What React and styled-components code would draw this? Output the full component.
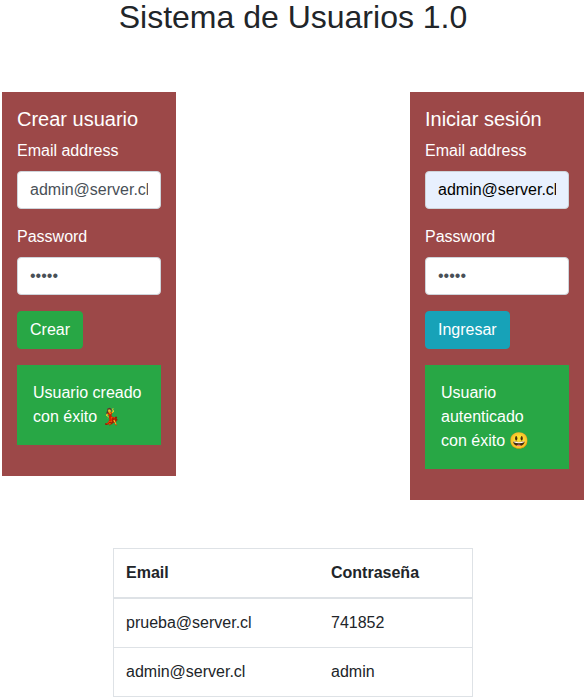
import React from "react";
import styled, { createGlobalStyle } from "styled-components";

const GlobalStyle = createGlobalStyle`
  *, *::before, *::after { box-sizing: border-box; }
  html { overflow: hidden; }
  body {
    margin: 0;
    background: #fff;
    color: #212529;
    font-family: "Liberation Sans", Arial, "Noto Color Emoji", sans-serif;
    font-size: 16px;
    line-height: 1.5;
  }
`;

const Page = styled.main`
  width: 587px;
  height: 699px;
  overflow: hidden;
`;

const Title = styled.h1`
  margin: -2px 0 56px;
  height: 38px;
  padding-right: 1px;
  font-size: 32px;
  font-weight: 400;
  line-height: 38px;
  text-align: center;
`;

const Panels = styled.section`
  display: flex;
  justify-content: space-between;
  align-items: flex-start;
  height: 456px;
  padding: 0 3px 0 2px;
`;

const Card = styled.form`
  width: 174px;
  padding: 15px 15px 31px;
  background: #9c4848;
  color: #fff;
`;

const CardTitle = styled.h2`
  margin: 0 0 8px;
  font-size: 20px;
  font-weight: 400;
  line-height: 24px;
`;

const Field = styled.div`
  margin-bottom: 16px;
`;

const Label = styled.label`
  display: block;
  margin-bottom: 8px;
`;

const Input = styled.input`
  display: block;
  width: 100%;
  height: 38px;
  padding: 6px 12px;
  border: 1px solid #ced4da;
  border-radius: 4px;
  background: ${(p) => (p.$autofilled ? "#e8f0fe" : "#fff")};
  color: ${(p) => (p.$autofilled ? "#000" : "#495057")};
  font: inherit;
  outline: none;
`;

const Button = styled.button`
  display: block;
  height: 38px;
  padding: 6px 12px;
  border: 1px solid ${(p) => p.$color};
  border-radius: 4px;
  background: ${(p) => p.$color};
  color: #fff;
  font: inherit;
`;

const Message = styled.div`
  margin-top: 16px;
  padding: 16px;
  background: #28a745;
`;

const Table = styled.table`
  width: 360px;
  margin: 0 0 0 113px;
  border-collapse: collapse;
  table-layout: fixed;
  border: 1px solid #dee2e6;
`;

const HeadCell = styled.th`
  width: ${(p) => p.$width};
  padding: 12px;
  border-bottom: 2px solid #dee2e6;
  text-align: left;
  font-weight: 700;
`;

const Cell = styled.td`
  padding: 12px;
  border-top: 1px solid #dee2e6;
`;

const users = [
  { email: "prueba@server.cl", password: "741852" },
  { email: "admin@server.cl", password: "admin" },
];

function UserForm({ id, title, action, color, autofilled, message }) {
  return (
    <Card onSubmit={(e) => e.preventDefault()}>
      <CardTitle>{title}</CardTitle>
      <Field>
        <Label htmlFor={`${id}-email`}>Email address</Label>
        <Input id={`${id}-email`} type="email" defaultValue="admin@server.cl" $autofilled={autofilled} />
      </Field>
      <Field>
        <Label htmlFor={`${id}-password`}>Password</Label>
        <Input id={`${id}-password`} type="password" defaultValue="admin" />
      </Field>
      <Button type="submit" $color={color}>{action}</Button>
      <Message>{message}</Message>
    </Card>
  );
}

export default function App() {
  return (
    <Page>
      <GlobalStyle />
      <Title>Sistema de Usuarios 1.0</Title>
      <Panels>
        <UserForm id="create" title="Crear usuario" action="Crear" color="#28a745" message="Usuario creado con éxito 💃" />
        <UserForm id="login" title="Iniciar sesión" action="Ingresar" color="#17a2b8" autofilled message="Usuario autenticado con éxito 😃" />
      </Panels>
      <Table>
        <thead>
          <tr>
            <HeadCell $width="205.5px">Email</HeadCell>
            <HeadCell>Contraseña</HeadCell>
          </tr>
        </thead>
        <tbody>
          {users.map((u) => (
            <tr key={u.email}>
              <Cell>{u.email}</Cell>
              <Cell>{u.password}</Cell>
            </tr>
          ))}
        </tbody>
      </Table>
    </Page>
  );
}
